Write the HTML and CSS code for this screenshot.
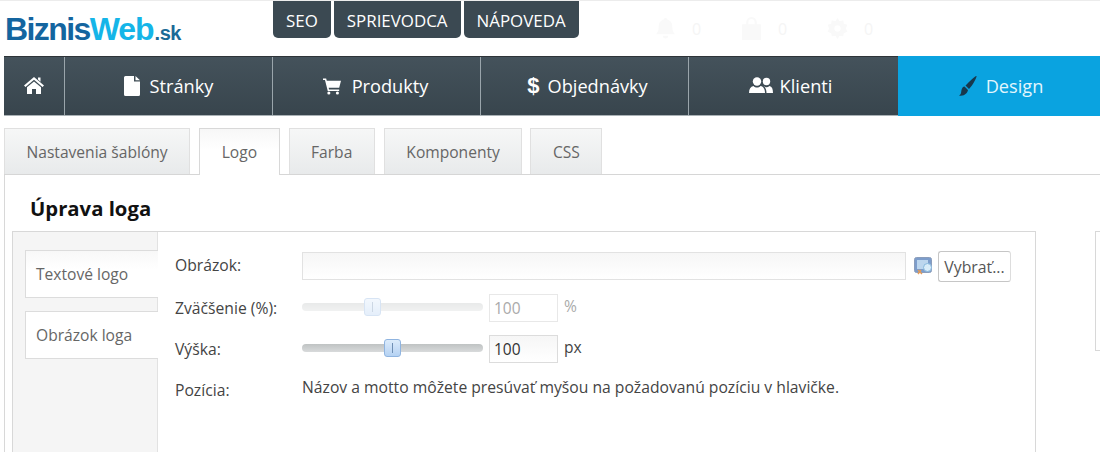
FILE: index.html
```html
<!DOCTYPE html>
<html lang="sk">
<head>
<meta charset="utf-8">
<title>BiznisWeb.sk</title>
<link rel="stylesheet" href="styles.css">
</head>
<body>
<header class="top">
  <a class="logo"><span class="l1">Biznis</span><span class="l2">Web</span><span class="l3">.sk</span></a>
  <div class="toplinks">
    <a class="toplink">SEO</a>
    <a class="toplink">SPRIEVODCA</a>
    <a class="toplink">NÁPOVEDA</a>
  </div>
  <div class="status">
    <svg class="st-icon" viewBox="0 0 20 22"><path d="M10 1c1 0 1.600.6 1.600 1.500C14.800 3.200 16.500 6 16.500 9c0 4 1 5.500 2.500 7.500H1C2.500 14.500 3.500 13 3.500 9c0-3 1.700-5.800 4.900-6.500C8.400 1.600 9 1 10 1zM7.500 18h5a2.500 2.500 0 0 1-5 0z"/></svg>
    <span class="st-num">0</span>
    <svg class="st-icon" viewBox="0 0 20 22"><path d="M1 7h4V5a5 5 0 0 1 10 0v2h4v15H1zM7 7h6V5a3 3 0 0 0-6 0z"/></svg>
    <span class="st-num">0</span>
    <svg class="st-icon" viewBox="0 0 20 22"><path fill-rule="evenodd" d="M10 1l2 3 3.500-1 .5 3.500 3.500 1-1.500 3.500 1.500 3-3.500 1.500-.5 3-3.500-.5-2 3-2-3-3.500.5-.5-3L.5 14l1.500-3L.5 7.500l3.500-1L4.500 3 8 4zM10 8a3 3 0 1 0 0 6 3 3 0 0 0 0-6z"/></svg>
    <span class="st-num">0</span>
  </div>
</header>

<nav class="nav">
  <a class="nav-item nav-home">
    <svg class="ni ni-home" viewBox="0 0 20 18"><path d="M14 1.500h2.500v4.200L14 3.500zM10 1L0 9.500 1.500 11 10 3.800 18.500 11 20 9.500zM10 5.500L3 11.300V18h5v-5h4v5h5v-6.700z"/></svg>
  </a>
  <a class="nav-item">
    <svg class="ni ni-page" viewBox="0 0 16 20"><path d="M1.500 0H10v5.500h6V18.500a1.500 1.500 0 0 1-1.500 1.500h-13A1.500 1.500 0 0 1 0 18.500V1.500A1.500 1.500 0 0 1 1.500 0zM11.500 0L16 4.200h-4.500z"/></svg>
    <span>Stránky</span>
  </a>
  <a class="nav-item nav-cart">
    <svg class="ni ni-cart" viewBox="0 0 20 18"><path d="M0 0h3.500l.7 2.500H20l-2 8H6.300l.4 1.800H18v1.700H5.300L2.200 1.700H0z"/><circle cx="6.500" cy="16.300" r="1.700"/><circle cx="16" cy="16.300" r="1.700"/></svg>
    <span>Produkty</span>
  </a>
  <a class="nav-item nav-orders">
    <span class="dollar">$</span>
    <span>Objednávky</span>
  </a>
  <a class="nav-item nav-clients">
    <svg class="ni ni-users" viewBox="0 0 24 16"><circle cx="8" cy="4.500" r="4.200"/><path d="M0 16c0-4 1.500-6.500 4.500-7 1 1 2.200 1.500 3.500 1.500s2.500-.5 3.500-1.500c3 .5 4.500 3 4.500 7z"/><circle cx="17.500" cy="4.500" r="3.700"/><path d="M17.500 16c0-3-.8-5.500-3-7.300.8.900 2 1.500 3 1.500s2-.4 2.900-1.200c2.500.5 3.600 2.700 3.600 7z"/></svg>
    <span>Klienti</span>
  </a>
  <a class="nav-item nav-active">
    <svg class="ni ni-brush" viewBox="0 0 18 20"><path d="M17.500 0c.5.500-3 8.500-7.500 13L6.500 9.500C11 5 17 -.5 17.500 0zM5.500 10.500l3.500 3.500c-.5 3-3.500 6.500-9 5.500 2.500-1 2-3.500 2.500-5.500.4-1.800 1.500-3.500 3-3.500z"/></svg>
    <span>Design</span>
  </a>
</nav>

<div class="tabs">
  <a class="tab">Nastavenia šablóny</a>
  <a class="tab tab-active">Logo</a>
  <a class="tab">Farba</a>
  <a class="tab">Komponenty</a>
  <a class="tab">CSS</a>
</div>

<main class="content">
  <h1 class="title">Úprava loga</h1>
  <div class="panels">
    <section class="panel">
      <aside class="side">
        <a class="side-tab side-first">Textové logo</a>
        <a class="side-tab">Obrázok loga</a>
      </aside>
      <div class="form">
        <div class="row row-file">
          <label class="lbl">Obrázok:</label>
          <input class="file-input" type="text">
          <svg class="browse" viewBox="0 0 18 18">
            <rect x="0.500" y="0.500" width="17" height="15" rx="2" fill="#7d9dcb" stroke="#8a9dbb"/>
            <rect x="3" y="3" width="11" height="9" fill="#bcd6ee"/>
            <circle cx="13.500" cy="10.500" r="4" fill="#d8ecf9" stroke="#86b8dd"/>
            <path d="M4 17l3-4M4 13l4 4" stroke="#e39a56" stroke-width="1.400" fill="none"/>
          </svg>
          <button class="pick" type="button">Vybrať...</button>
        </div>
        <div class="row row-slider row-off">
          <label class="lbl">Zväčšenie (%):</label>
          <div class="slider"><span class="thumb thumb-a"></span></div>
          <input class="num" type="text" value="100" disabled>
          <span class="unit">%</span>
        </div>
        <div class="row row-slider">
          <label class="lbl">Výška:</label>
          <div class="slider"><span class="thumb thumb-b"></span></div>
          <input class="num" type="text" value="100">
          <span class="unit">px</span>
        </div>
        <div class="row row-text">
          <label class="lbl">Pozícia:</label>
          <p class="hint">Názov a motto môžete presúvať myšou na požadovanú pozíciu v hlavičke.</p>
        </div>
      </div>
    </section>
    <section class="panel-right"></section>
  </div>
</main>
</body>
</html>
```
FILE: styles.css
```css
* { box-sizing: border-box; }
html, body { margin: 0; padding: 0; height: 452px; overflow: hidden; background: #fff; }
body { font-family: "Open Sans", sans-serif; color: #444; width: 1100px; }

.top { height: 56px; display: flex; border-top: 1px solid #ececec; position: relative; }
.logo { width: 273px; padding: 10px 0 0 5px; font-family: "Liberation Sans", sans-serif; font-size: 32px; font-weight: 700; letter-spacing: -1.600px; line-height: 36px; white-space: nowrap; }
.l1 { color: #14659f; }
.l2 { color: #15b5e8; letter-spacing: -1px; }
.l3 { color: #1a6a96; font-size: 20px; letter-spacing: -.5px; margin-left: 1px; }
.toplinks { display: flex; gap: 3px; height: 37px; width: 382px; }
.toplink { background: #3b4952; color: #fff; font-size: 16.900px; line-height: 40px; padding: 0 13px; border-radius: 0 0 5px 5px; height: 37px; white-space: nowrap; }
.status { display: flex; align-items: center; height: 56px; padding-bottom: 1px; }
.st-icon { width: 21px; height: 23px; fill: #f9f9f9; }
.st-num { color: #f5f5f5; font-size: 16px; width: 65px; padding-left: 16px; }

.nav { display: flex; height: 60px; margin-left: 4px; border-top: 1px solid #2e3438; border-bottom: 1px solid #aab2b6; background: linear-gradient(#44525b, #38454d); }
.nav-item { display: flex; align-items: center; justify-content: center; gap: 10px; width: 208px; border-left: 1px solid #9aa5ab; color: #fff; font-size: 18.200px; }
.nav-home { width: 60px; border-left: 0; }
.nav-cart { gap: 11px; padding-right: 2px; }
.nav-orders { padding-left: 6px; gap: 9px; }
.nav-clients { width: 210px; gap: 7px; padding-right: 6px; }
.nav-active { flex: 1; width: auto; background: #0aa3e0; border-left: 0; color: #e2f6fd; margin-top: -1px; margin-bottom: -1px; padding-left: 4px; gap: 9px; }
.ni { fill: #fff; display: block; flex: none; }
.ni-home { width: 20px; height: 18px; margin-bottom: 3px; }
.ni-page { width: 16px; height: 20px; }
.ni-cart { width: 18px; height: 17px; }
.ni-users { width: 24px; height: 16px; margin-bottom: 2px; }
.ni-brush { width: 18px; height: 20px; fill: #17384d; }
.dollar { font-family: "Liberation Sans", sans-serif; font-weight: 700; font-size: 22px; margin-right: -1px; }

.tabs { display: flex; gap: 9px; margin: 12px 0 0 4px; height: 47px; border-bottom: 1px solid #d6d6d6; }
.tab { height: 46px; border: 1px solid #e0e0e0; border-bottom: 0; background: linear-gradient(#f6f7f7, #e8eaeb); color: #666; font-size: 15.600px; line-height: 46px; padding: 0 21.500px; white-space: nowrap; }
.tab:last-child { margin-left: -1px; }
.tab-active { height: 47px; background: linear-gradient(#f7f7f7, #fff 45%); border-color: #d8d8d8; border-bottom: 0; position: relative; color: #666; }

.content { margin-left: 4px; border-left: 1px solid #d8d8d8; height: 277px; }
.title { margin: 0; padding: 21px 0 0 25px; font-size: 20.300px; line-height: 25px; height: 56px; color: #111; font-weight: 700; }
.panels { display: flex; margin-left: 7px; }
.panel { width: 1024px; height: 240px; border: 1px solid #d8d8d8; display: flex; flex: none; }
.panel-right { width: 20px; height: 120px; margin-left: 59px; border: 1px solid #d8d8d8; border-right: 0; flex: none; }
.side { width: 145px; background: #f5f5f5; border-right: 1px solid #e2e2e2; padding: 18px 0 0 12px; flex: none; }
.side-tab { display: block; height: 48px; margin-bottom: 13px; background: #fff; border: 1px solid #dcdcdc; border-right: 0; margin-right: -1px; color: #666; font-size: 15.600px; line-height: 46px; padding-left: 10px; position: relative; }
.side-first { background: linear-gradient(#f8f8f8, #fff 40%); }

.form { flex: 1; padding: 20px 0 0 17px; font-size: 15.700px; color: #444; }
.row { display: flex; align-items: flex-start; }
.lbl { width: 127px; flex: none; font-size: 15.700px; line-height: 24px; }
.row-file { height: 42px; position: relative; }
.row-file .lbl { padding-top: 1px; }
.file-input { width: 604px; height: 28px; border: 1px solid #e2e2e2; background: linear-gradient(#f6f6f6, #fff); margin: 0; }
.browse { width: 18px; height: 18px; margin: 5px 0 0 8px; flex: none; }
.pick { width: 73px; height: 31px; margin: -1px 0 0 6px; border: 1px solid #c6c6c6; border-right-color: #ddd; border-radius: 3px; background: #fff; font: 15.800px "Open Sans", sans-serif; color: #555; padding: 0; white-space: nowrap; }

.row-slider { height: 41px; }
.row-slider .lbl { padding-top: 2px; }
.slider { width: 181px; height: 8px; margin-top: 9px; border-radius: 4px; background: linear-gradient(#bfc3c3, #d8dadb); position: relative; flex: none; }
.thumb { position: absolute; top: -5px; width: 17px; height: 18px; border: 1px solid #8fb4e0; border-radius: 3px; background: linear-gradient(#dcebfb, #b5d2f3); }
.thumb::after { content: ""; position: absolute; left: 7px; top: 3px; height: 10px; border-left: 1px solid #6f8fb4; }
.thumb-a { left: 62px; }
.thumb-b { left: 82px; }
.num { width: 69px; height: 28px; margin: 0 0 0 6px; border: 1px solid #dcdcdc; background: linear-gradient(#f6f6f6, #fff); font: 15.500px "Open Sans", sans-serif; color: #333; padding: 0 0 0 4px; flex: none; }
.unit { margin-left: 6px; font-size: 15.600px; line-height: 24px; }
.row-off .slider { opacity: .35; }
.row-off .num { color: #aaa; border-color: #e8e8e8; background: #fff; }
.row-off .unit { color: #aaa; }
.row-text { margin-top: -1px; }
.row-text .lbl { padding-top: 3px; }
.hint { margin: 0; font-size: 15.700px; line-height: 24px; color: #444; white-space: nowrap; }
```
